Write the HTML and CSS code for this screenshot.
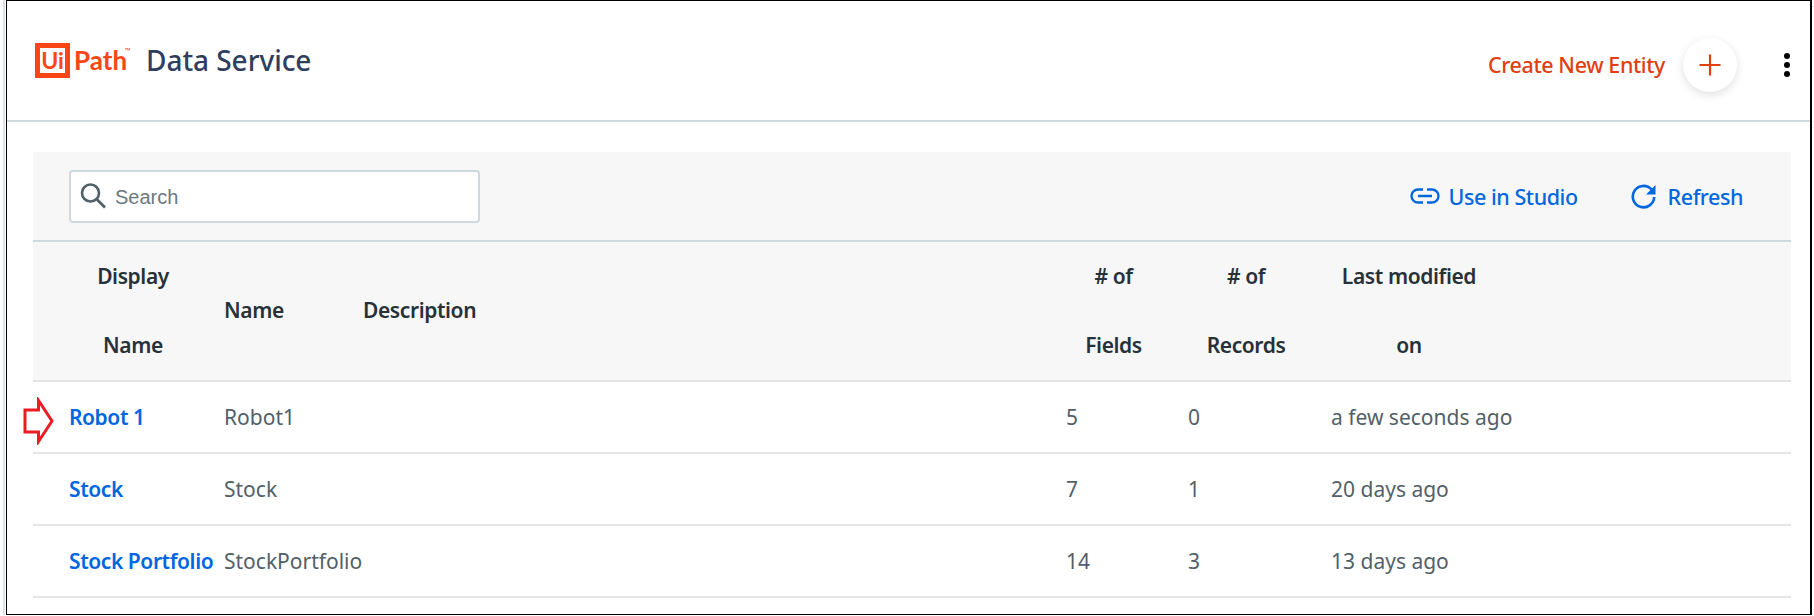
FILE: index.html
```html
<!DOCTYPE html>
<html lang="en">
<head>
<meta charset="utf-8">
<title>Data Service</title>
<link rel="stylesheet" href="styles.css">
</head>
<body>
<div class="gutter">
  <div class="frame">
    <header class="topbar">
      <div class="brand">
        <div class="logo"><span class="logo-box">Ui</span><span class="logo-path">Path</span><span class="logo-tm">™</span></div>
        <h1 class="title">Data Service</h1>
      </div>
      <div class="top-actions">
        <span class="create-label">Create New Entity</span>
        <button class="fab" type="button" aria-label="Create New Entity">
          <svg width="24" height="24" viewBox="0 0 24 24"><path d="M12 1.500V22.500M1.500 12H22.500" stroke="#e0400f" stroke-width="2.200" fill="none"/></svg>
        </button>
        <div class="kebab"><i></i><i></i><i></i></div>
      </div>
    </header>
    <main class="content">
      <section class="panel">
        <div class="toolbar">
          <label class="search">
            <svg class="search-icon" width="28" height="28" viewBox="0 0 28 28"><circle cx="11.500" cy="11" r="8.500" stroke="#526069" stroke-width="2.600" fill="none"/><path d="M18 17.500L26 25.500" stroke="#526069" stroke-width="2.800" fill="none"/></svg>
            <span class="search-text">Search</span>
          </label>
          <div class="tools">
            <a class="tool tool-studio">
              <svg width="30" height="16" viewBox="0 0 30 16"><path d="M13 1.500H8A6.500 6.500 0 0 0 8 14.500H13M17 1.500H22A6.500 6.500 0 0 1 22 14.500H17M8 8H22" stroke="#0067df" stroke-width="2.300" fill="none"/></svg>
              <span>Use in Studio</span>
            </a>
            <a class="tool tool-refresh">
              <svg width="25" height="25" viewBox="0 0 25 25"><path d="M20.500 5.500A10.700 10.700 0 1 0 23.200 13" stroke="#0067df" stroke-width="2.600" fill="none"/><path d="M24.500 1V10.500H15Z" fill="#0067df"/></svg>
              <span>Refresh</span>
            </a>
          </div>
        </div>
        <div class="row head">
          <div class="hc c-display">Display<br>Name</div>
          <div class="hc c-name">Name</div>
          <div class="hc c-desc">Description</div>
          <div class="hc c-fields">#&nbsp;of<br>Fields</div>
          <div class="hc c-records">#&nbsp;of<br>Records</div>
          <div class="hc c-modified">Last modified<br>on</div>
        </div>
        <div class="row body-row marked">
          <svg class="marker" width="34" height="48" viewBox="0 0 34 48"><path d="M3 13H16.500V3.500L30 24L16.500 44.500V35H3Z" fill="#fff" stroke="#ed1c24" stroke-width="3"/></svg>
          <a class="link">Robot 1</a><span>Robot1</span><span></span><span>5</span><span>0</span><span>a few seconds ago</span>
        </div>
        <div class="row body-row">
          <a class="link">Stock</a><span>Stock</span><span></span><span>7</span><span>1</span><span>20 days ago</span>
        </div>
        <div class="row body-row">
          <a class="link">Stock Portfolio</a><span>StockPortfolio</span><span></span><span>14</span><span>3</span><span>13 days ago</span>
        </div>
      </section>
    </main>
  </div>
</div>
</body>
</html>
```
FILE: styles.css
```css
* { box-sizing: border-box; }
html, body { margin: 0; padding: 0; background: #fff; }
body { width: 1814px; height: 616px; overflow: hidden; font-family: "Noto Sans", "Open Sans", sans-serif; }

.gutter {
  margin-left: 3px;
  padding-left: 1px;
  border-left: 2px solid #dbe3ea;
  height: 615px;
  width: 1809px;
}
.frame {
  height: 615px;
  border: 1px solid #000;
  border-top-width: 1.500px;
  border-right-width: 2px;
}

.topbar {
  height: 121px;
  border-bottom: 2px solid #cfdadd;
  display: flex;
  align-items: center;
  justify-content: space-between;
  padding: 8px 20px 0 28px;
}
.brand { display: flex; align-items: center; margin-top: -9px; }
.logo { display: flex; align-items: center; position: relative; color: #fa4616; width: 111px; }
.logo-box {
  width: 35px; height: 35px;
  border: 5px solid #fa4616;
  display: flex; align-items: center; justify-content: center;
  font: 700 23px/1 "Lato", sans-serif;
}
.logo-path { font: 700 26px/1 "Lato", sans-serif; margin-left: 4px; }
.logo-tm { font: 400 7px/1 "Noto Sans", sans-serif; position: absolute; left: 90px; top: 4px; }
.title { margin: 0; font-size: 28px; font-weight: 500; color: #2f3e60; line-height: 36px; letter-spacing: -.05px; }

.top-actions { display: flex; align-items: center; }
.create-label { font-size: 21.500px; font-weight: 500; letter-spacing: -.4px; color: #e0400f; margin-right: 18px; }
.fab {
  width: 54px; height: 54px; border: 0; border-radius: 50%;
  background: #fff; padding: 0;
  display: flex; align-items: center; justify-content: center;
  box-shadow: 0 3px 10px rgba(0, 0, 0, .12);
}
.kebab { display: flex; flex-direction: column; gap: 3px; margin-left: 47px; }
.kebab i { display: block; width: 6px; height: 6px; border-radius: 50%; background: #000; }

.content { padding: 30px 20px 0 26px; }
.panel { width: 1758px; }

.toolbar {
  height: 90px;
  background: #f7f7f7;
  border-bottom: 2px solid #cfdadd;
  display: flex;
  align-items: center;
  justify-content: space-between;
  padding: 0 48px 0 36px;
}
.search {
  width: 411px; height: 53px;
  background: #fff;
  border: 2px solid #cfd8dd;
  border-radius: 4px;
  display: flex; align-items: center;
  padding-left: 8px;
  gap: 8px;
}
.search-text { font: 400 20px/1 "Liberation Sans", sans-serif; color: #6b7882; padding-top: 2px; }
.tools { display: flex; align-items: center; gap: 53px; }
.tool { display: flex; align-items: center; color: #0067df; font-size: 21.500px; font-weight: 500; letter-spacing: -.45px; }
.tool-studio { gap: 9px; }
.tool-refresh { gap: 12px; }

.row {
  display: grid;
  grid-template-columns: 155px 139px 703px 122px 143px 1fr;
  padding-left: 36px;
  border-bottom: 2px solid #e3e5e6;
}
.head {
  height: 140px;
  background: #f7f7f7;
  align-items: center;
  font-size: 21px;
  font-weight: 600;
  letter-spacing: -.4px;
  line-height: 69px;
  color: #273139;
}
.hc { text-align: left; }
.c-name, .c-desc { padding-bottom: 2px; }
.c-display { width: 128px; text-align: center; }
.c-fields { width: 95px; text-align: center; }
.c-records { width: 116px; text-align: center; }
.c-modified { width: 156px; text-align: center; }

.body-row {
  height: 72px;
  align-items: center;
  font-size: 21px;
  color: #526069;
  position: relative;
}
.link { color: #0067df; font-weight: 600; font-size: 21px; letter-spacing: -.42px; }
.marker { position: absolute; left: -11px; top: 15px; }
```
